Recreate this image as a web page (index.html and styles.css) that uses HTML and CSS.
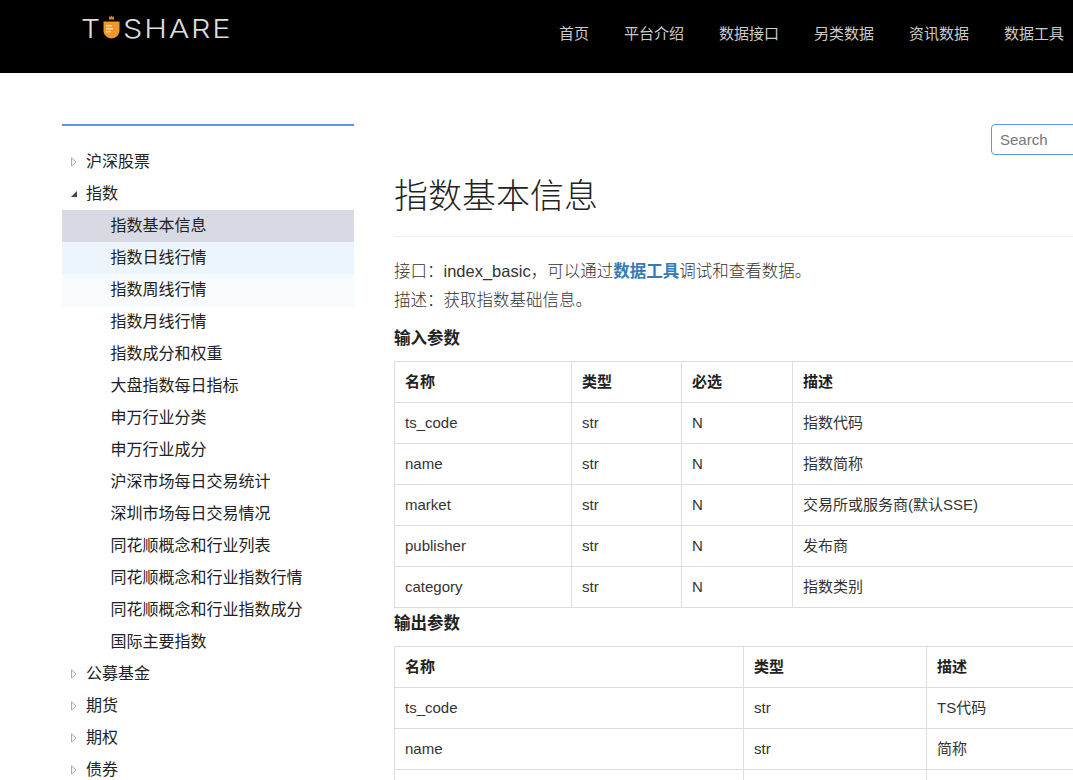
FILE: index.html
```html
<!DOCTYPE html>
<html lang="zh-CN">
<head>
<meta charset="utf-8">
<title>指数基本信息</title>
<link rel="stylesheet" href="styles.css">
</head>
<body>
<svg class="defs" width="0" height="0" aria-hidden="true">
  <symbol id="tri-closed" viewBox="0 0 6 10"><path d="M0.500 0.800L5.200 5L0.500 9.200z" fill="#fff" stroke="#aaa" stroke-width="1"/></symbol>
  <symbol id="tri-open" viewBox="0 0 8 8"><path d="M7 1V7H1z" fill="#444"/></symbol>
</svg>
<header class="topbar">
  <a class="logo" href="#">
    <span class="logo-t">T</span>
    <svg class="logo-icon" width="17" height="24" viewBox="0 0 17 24" aria-hidden="true">
      <path d="M6 0.500l1 2 1.500-2 1.500 2 1-2v4H6z" fill="#d98a1e"/>
      <path d="M0.500 6.500h16v9c0 4.500-3.500 7.500-8 8-4.500-.5-8-3.500-8-8z" fill="#f0972a"/>
      <path d="M3 10h6v1.500H3zM3 13h7v1.500H3zM3 16h5v1.500H3z" fill="#fbd9a8"/>
    </svg>
    <span class="logo-rest">SHARE</span>
  </a>
  <nav class="mainnav">
    <a href="#">首页</a>
    <a href="#">平台介绍</a>
    <a href="#">数据接口</a>
    <a href="#">另类数据</a>
    <a href="#">资讯数据</a>
    <a href="#">数据工具</a>
  </nav>
</header>
<div class="page">
  <aside class="sidebar">
    <ul class="tree">
      <li class="node"><svg class="arrow"><use href="#tri-closed"/></svg>沪深股票</li>
      <li class="node"><svg class="arrow"><use href="#tri-open"/></svg>指数</li>
      <li class="leaf selected">指数基本信息</li>
      <li class="leaf hover1">指数日线行情</li>
      <li class="leaf hover2">指数周线行情</li>
      <li class="leaf">指数月线行情</li>
      <li class="leaf">指数成分和权重</li>
      <li class="leaf">大盘指数每日指标</li>
      <li class="leaf">申万行业分类</li>
      <li class="leaf">申万行业成分</li>
      <li class="leaf">沪深市场每日交易统计</li>
      <li class="leaf">深圳市场每日交易情况</li>
      <li class="leaf">同花顺概念和行业列表</li>
      <li class="leaf">同花顺概念和行业指数行情</li>
      <li class="leaf">同花顺概念和行业指数成分</li>
      <li class="leaf">国际主要指数</li>
      <li class="node"><svg class="arrow"><use href="#tri-closed"/></svg>公募基金</li>
      <li class="node"><svg class="arrow"><use href="#tri-closed"/></svg>期货</li>
      <li class="node"><svg class="arrow"><use href="#tri-closed"/></svg>期权</li>
      <li class="node"><svg class="arrow"><use href="#tri-closed"/></svg>债券</li>
    </ul>
  </aside>
  <main class="content">
    <div class="searchrow"><input class="search" type="text" placeholder="Search"></div>
    <h1>指数基本信息</h1>
    <p>接口：index_basic，可以通过<a href="#">数据工具</a>调试和查看数据。</p>
    <p>描述：获取指数基础信息。</p>
    <h2>输入参数</h2>
    <table class="t-in">
      <colgroup><col class="c1"><col class="c2"><col class="c3"><col></colgroup>
      <thead><tr><th>名称</th><th>类型</th><th>必选</th><th>描述</th></tr></thead>
      <tbody>
        <tr><td>ts_code</td><td>str</td><td>N</td><td>指数代码</td></tr>
        <tr><td>name</td><td>str</td><td>N</td><td>指数简称</td></tr>
        <tr><td>market</td><td>str</td><td>N</td><td>交易所或服务商(默认SSE)</td></tr>
        <tr><td>publisher</td><td>str</td><td>N</td><td>发布商</td></tr>
        <tr><td>category</td><td>str</td><td>N</td><td>指数类别</td></tr>
      </tbody>
    </table>
    <h2 class="after">输出参数</h2>
    <table class="t-out">
      <colgroup><col class="c1"><col class="c2"><col></colgroup>
      <thead><tr><th>名称</th><th>类型</th><th>描述</th></tr></thead>
      <tbody>
        <tr><td>ts_code</td><td>str</td><td>TS代码</td></tr>
        <tr><td>name</td><td>str</td><td>简称</td></tr>
        <tr><td></td><td></td><td></td></tr>
      </tbody>
    </table>
  </main>
</div>
</body>
</html>
```

FILE: styles.css
```css
* { box-sizing: border-box; }
html, body { margin: 0; padding: 0; height: 780px; overflow: hidden; background: #fff; }
body { width: 1400px; font-family: "Liberation Sans", "Noto Sans CJK SC", sans-serif; font-size: 16px; color: #333; }
a { text-decoration: none; }
.defs { position: absolute; }

.topbar { display: flex; justify-content: space-between; width: 1073px; height: 73px; background: #000; padding-left: 81px; }
.logo { display: flex; align-items: flex-start; gap: 3px; height: 40px; padding-top: 15px; color: #ddd; font-family: "Inter", sans-serif; font-weight: 300; font-size: 26px; line-height: 27px; }
.logo-t { width: 19px; transform: scaleX(1.15); transform-origin: left; }
.logo-icon { flex: none; }
.logo-rest { letter-spacing: 1.500px; transform: scaleX(1.18); transform-origin: left; }
.mainnav { display: flex; gap: 35px; padding: 15px 9px 0 0; font-size: 15px; line-height: 38px; }
.mainnav a { color: #ccc; }

.page { display: flex; padding-left: 62px; gap: 40px; }
.sidebar { flex: none; width: 292px; margin-top: 51px; border-top: 2px solid #6495ed; padding-top: 20px; }
.tree { list-style: none; margin: 0; padding: 0; color: #222; }
.node, .leaf { height: 32px; line-height: 32px; white-space: nowrap; }
.node { display: flex; align-items: center; padding-left: 8px; }
.leaf { padding-left: 48.500px; }
.selected { background: #d8dae3; }
.hover1 { background: #edf5fc; }
.hover2 { background: #f7fbfd; }
.arrow { flex: none; width: 8px; height: 10px; margin-right: 8px; }

.content { flex: none; width: 800px; }
.searchrow { height: 31px; margin-top: 51px; padding-left: 597px; }
.search { display: block; width: 200px; height: 31px; border: 1px solid #6495ed; border-radius: 4px; padding: 0 8px; font: 15px "Liberation Sans", sans-serif; outline: none; }
.search::placeholder { color: #777; opacity: 1; }
h1 { margin: 0 0 20px; height: 82px; padding-top: 16px; font-size: 34px; line-height: 50px; font-weight: 300; color: #222; border-bottom: 1px solid #eee; }
p { margin: 0; font-size: 16.500px; line-height: 29px; font-weight: 300; }
p a { color: #337ab7; font-weight: 700; }
h2 { margin: 10px 0 10px; font-size: 16.500px; line-height: 26px; font-weight: 700; color: #222; }
h2.after { margin: 2px 0 10px; }
table { width: 100%; table-layout: fixed; border-collapse: collapse; font-size: 15px; line-height: 20px; color: #333; }
th, td { height: 41px; padding: 10px; border: 1px solid #ddd; text-align: left; white-space: nowrap; }
th { font-weight: 700; color: #222; }
.t-in .c1 { width: 177px; }
.t-in .c2 { width: 110px; }
.t-in .c3 { width: 111px; }
.t-out .c1 { width: 349px; }
.t-out .c2 { width: 183px; }
```
